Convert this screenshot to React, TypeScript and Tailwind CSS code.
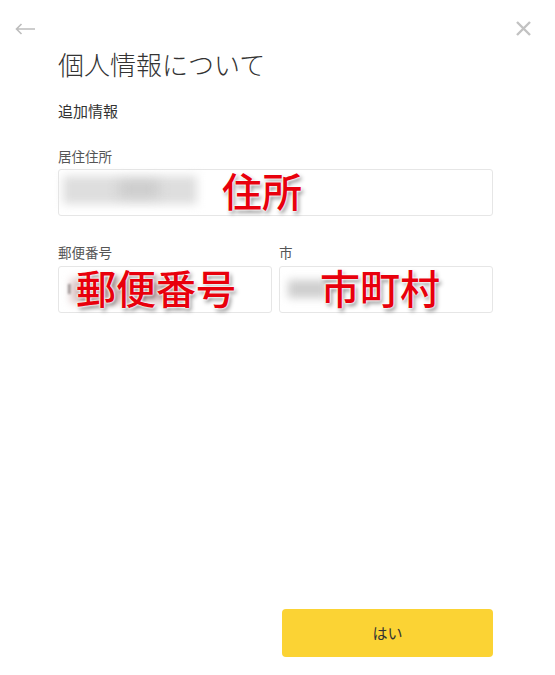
const jp = "font-['Noto_Sans_CJK_JP','Noto_Sans',sans-serif]";
const stamp =
  "absolute top-1/2 -mt-[3px] -translate-y-1/2 whitespace-nowrap text-[40px] leading-none font-medium text-[#e8000c] [text-shadow:0_0_2px_#fff,0_0_2px_#fff,0_0_3px_#fff,2px_3px_4px_rgba(0,0,0,0.45)]";

function Field({ className = '', children }: { className?: string; children?: React.ReactNode }) {
  return (
    <div className={`relative h-[47px] rounded-[3px] border border-[#e6e6e6] bg-white ${className}`}>
      {children}
    </div>
  );
}

export default function App() {
  return (
    <div className={`flex h-[675px] w-[555px] flex-col overflow-hidden bg-white ${jp}`}>
      <div className="flex h-[48px] items-start justify-between pl-[15px] pr-[23px] pt-[20px]">
        <svg width="20" height="18" viewBox="0 0 20 18" fill="none" stroke="#bdbdbd" strokeWidth="1.6">
          <path d="M20 9H1.5M6.5 4L1.5 9L6.5 14" />
        </svg>
        <svg width="17" height="17" viewBox="0 0 17 17" fill="none" stroke="#c2c2c2" strokeWidth="2.4">
          <path d="M2 2L15 15M15 2L2 15" />
        </svg>
      </div>

      <div className="flex flex-1 flex-col pl-[58px] pr-[62px] pb-[18px]">
        <h1 className="text-[26px] font-light leading-[32px] text-[#333]">個人情報について</h1>
        <p className="mt-[21px] text-[15px] leading-[20px] text-[#333]">追加情報</p>

        <label className="mt-[26px] text-[13.5px] leading-[18px] text-[#555]">居住住所</label>
        <Field className="mt-[4px]">
          <div className="absolute left-[4px] top-[6px] h-[28px] w-[134px] bg-[#dedede] blur-[5px]" />
          <div className="absolute left-[60px] top-[12px] h-[14px] w-[40px] bg-[#cacaca] blur-[6px]" />
          <span className={`${stamp} left-[163px]`}>住所</span>
        </Field>

        <div className="mt-[27px] grid grid-cols-2 gap-[7px]">
          <div className="flex flex-col">
            <label className="text-[13.5px] leading-[18px] text-[#555]">郵便番号</label>
            <Field className="mt-[5px]">
              <div className="absolute left-[9px] top-[17px] h-[10px] w-[3px] bg-[#888] blur-[1px]" />
              <div className="absolute left-[12px] top-[12px] h-[24px] w-[110px] bg-[#d8c0c0] blur-[4px]" />
              <span className={`${stamp} left-[17px]`}>郵便番号</span>
            </Field>
          </div>
          <div className="flex flex-col">
            <label className="text-[13.5px] leading-[18px] text-[#555]">市</label>
            <Field className="mt-[5px]">
              <div className="absolute left-[8px] top-[13px] h-[18px] w-[40px] bg-[#cfcfcf] blur-[4px]" />
              <span className={`${stamp} left-[40px]`}>市町村</span>
            </Field>
          </div>
        </div>

        <div className="mt-auto flex justify-end">
          <button className="h-[48px] w-[211px] rounded-[4px] bg-[#fbd334] text-[15px] text-[#333]">はい</button>
        </div>
      </div>
    </div>
  );
}
